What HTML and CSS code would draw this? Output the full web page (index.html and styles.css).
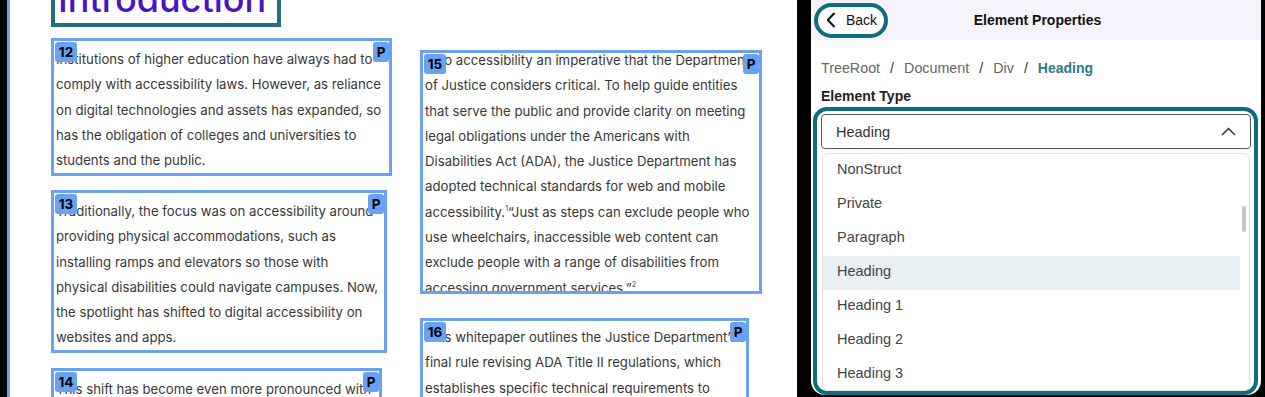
FILE: index.html
```html
<!DOCTYPE html>
<html lang="en">
<head>
    <meta charset="UTF-8">
    <meta name="viewport" content="width=device-width, initial-scale=1.0">
    <title>Element Properties</title>
    <link rel="stylesheet" href="styles.css">
</head>
<body>
    <div class="doc">
        <div class="page">
            <div class="col col-left">
                <div class="heading-box">Introduction</div>

                <div class="block b12">
                    <span class="tag num">12</span><span class="tag type">P</span>
                    <div class="line">Institutions of higher education have always had to</div>
                    <div class="line">comply with accessibility laws. However, as reliance</div>
                    <div class="line">on digital technologies and assets has expanded, so</div>
                    <div class="line">has the obligation of colleges and universities to</div>
                    <div class="line">students and the public.</div>
                </div>

                <div class="block b13">
                    <span class="tag num">13</span><span class="tag type">P</span>
                    <div class="line">Traditionally, the focus was on accessibility around</div>
                    <div class="line">providing physical accommodations, such as</div>
                    <div class="line">installing ramps and elevators so those with</div>
                    <div class="line">physical disabilities could navigate campuses. Now,</div>
                    <div class="line">the spotlight has shifted to digital accessibility on</div>
                    <div class="line">websites and apps.</div>
                </div>

                <div class="block b14">
                    <span class="tag num">14</span><span class="tag type">P</span>
                    <div class="line">This shift has become even more pronounced with</div>
                    <div class="line">the rapid growth of online learning platforms.</div>
                </div>
            </div>

            <div class="col col-right">
                <div class="block b15">
                    <span class="tag num">15</span><span class="tag type">P</span>
                    <div class="lines">
                        <div class="line">Also accessibility an imperative that the Department</div>
                        <div class="line">of Justice considers critical. To help guide entities</div>
                        <div class="line">that serve the public and provide clarity on meeting</div>
                        <div class="line">legal obligations under the Americans with</div>
                        <div class="line">Disabilities Act (ADA), the Justice Department has</div>
                        <div class="line">adopted technical standards for web and mobile</div>
                        <div class="line">accessibility.<sup>1</sup>“Just as steps can exclude people who</div>
                        <div class="line">use wheelchairs, inaccessible web content can</div>
                        <div class="line">exclude people with a range of disabilities from</div>
                        <div class="line">accessing government services.”<sup>2</sup></div>
                    </div>
                </div>

                <div class="block b16">
                    <span class="tag num">16</span><span class="tag type">P</span>
                    <div class="line">This whitepaper outlines the Justice Department’s</div>
                    <div class="line">final rule revising ADA Title II regulations, which</div>
                    <div class="line">establishes specific technical requirements to</div>
                </div>
            </div>
        </div>
    </div>

    <div class="side">
        <div class="panel">
            <div class="panel-head">
                <button class="back-btn" type="button">
                    <svg width="10" height="16" viewBox="0 0 10 16"><polyline points="8,1.5 1.8,8 8,14.5" fill="none" stroke="#111" stroke-width="2" stroke-linecap="round" stroke-linejoin="round"/></svg>
                    <span>Back</span>
                </button>
                <div class="panel-title">Element Properties</div>
                <div></div>
            </div>

            <div class="panel-body">
                <nav class="crumbs">
                    <span>TreeRoot</span><span class="sep">/</span>
                    <span>Document</span><span class="sep">/</span>
                    <span>Div</span><span class="sep">/</span>
                    <span class="current">Heading</span>
                </nav>

                <div class="field-label">Element Type</div>

                <div class="combo">
                    <div class="select">
                        <span>Heading</span>
                        <svg width="15" height="9" viewBox="0 0 15 9"><polyline points="1,8 7.5,1.5 14,8" fill="none" stroke="#333" stroke-width="1.5"/></svg>
                    </div>
                    <div class="listbox">
                        <ul class="options">
                            <li>NonStruct</li>
                            <li>Private</li>
                            <li>Paragraph</li>
                            <li class="active">Heading</li>
                            <li>Heading 1</li>
                            <li>Heading 2</li>
                            <li>Heading 3</li>
                        </ul>
                        <div class="thumb"></div>
                    </div>
                </div>
            </div>
        </div>
    </div>
</body>
</html>
```

FILE: styles.css
```css
body {
    margin: 0;
    height: 397px;
    overflow: hidden;
    background: #000;
    display: flex;
}
.doc {
    margin-left: 7px;
    width: 790px;
    flex: none;
    background: #fff;
    border-left: 3px solid #69a1f5;
    box-sizing: border-box;
    overflow: hidden;
    font-family: Inter, "Liberation Sans", sans-serif;
}
.page {
    display: flex;
    align-items: flex-start;
    gap: 28px;
    margin-top: -25px;
    padding-left: 41px;
}
.col {
    display: flex;
    flex-direction: column;
    align-items: flex-start;
}
.col-right {
    margin-top: 75px;
    gap: 24px;
}
.heading-box {
    border: 4px solid #236e80;
    padding: 0 11px 4px 3px;
    font-size: 36px;
    font-weight: 500;
    line-height: 40px;
    color: #4b13c8;
    margin-bottom: 11px;
}
.block {
    position: relative;
    box-sizing: border-box;
    border: 3px solid #69a1f5;
    padding: 6px 2px 0;
    overflow: hidden;
    font-size: 13.2px;
    line-height: 25.3px;
    color: #383838;
    background: #fff;
}
.line {
    white-space: nowrap;
}
.line sup {
    font-size: 7px;
    line-height: 0;
    vertical-align: 6px;
}
.tag {
    position: absolute;
    top: 1px;
    height: 20px;
    background: #69a1f5;
    border-radius: 3px;
    color: #000;
    font-size: 13.5px;
    font-weight: 700;
    line-height: 21px;
    text-align: center;
}
.num {
    left: 1px;
    width: 22px;
}
.type {
    right: 0;
    width: 16px;
}
.b12 { width: 341px; height: 138px; margin-bottom: 14px; }
.b13 { width: 336px; height: 163px; margin-bottom: 15px; }
.b14 { width: 331px; height: 80px; }
.b15 { width: 342px; height: 244px; padding-top: 0; }
.b15 .lines { margin-top: -5px; }
.b16 { width: 329px; height: 100px; padding-top: 4px; }

.side {
    flex: none;
    width: 468px;
    box-sizing: border-box;
    padding: 0 4px 0 14px;
}
.panel {
    height: 395px;
    background: #fff;
    border-radius: 0 0 14px 14px;
    font-family: "Liberation Sans", Arial, sans-serif;
    color: #111;
}
.panel-head {
    height: 40px;
    background: #f6f3fc;
    display: grid;
    grid-template-columns: 1fr auto 1fr;
    align-items: center;
    padding-left: 3px;
}
.back-btn {
    justify-self: start;
    display: flex;
    align-items: center;
    gap: 10px;
    height: 35px;
    width: 74px;
    box-sizing: border-box;
    padding: 0 0 0 8px;
    border: 4px solid #0e6c7e;
    border-radius: 18px;
    background: #fff;
    font-family: "Liberation Sans", Arial, sans-serif;
    font-size: 14px;
    color: #111;
}
.panel-title {
    font-size: 14px;
    font-weight: 700;
}
.panel-body {
    padding: 0 10px;
}
.crumbs {
    margin-top: 18px;
    display: flex;
    gap: 10px;
    font-size: 14.3px;
    line-height: 20px;
    color: #666;
}
.crumbs .sep {
    color: #333;
}
.crumbs .current {
    color: #2b7a8c;
    font-weight: 700;
    font-size: 14px;
}
.field-label {
    margin-top: 8px;
    font-size: 14px;
    font-weight: 700;
    line-height: 20px;
    color: #222;
}
.combo {
    margin: 1px -7px 0 -8px;
    border: 4px solid #0e6c7e;
    border-radius: 14px;
    padding: 3px 3px 0 4px;
}
.select {
    height: 35px;
    box-sizing: border-box;
    border: 1px solid #555;
    border-radius: 4px;
    display: flex;
    align-items: center;
    justify-content: space-between;
    padding: 0 14px 0 14px;
    font-size: 14.5px;
    color: #333;
}
.listbox {
    position: relative;
    margin: 4px 1px 0;
    height: 238px;
    box-sizing: border-box;
    border: 1px solid #e2e2e2;
    border-radius: 6px;
    overflow: hidden;
}
.options {
    list-style: none;
    margin: 0;
    padding: 0 9px 0 0;
}
.options li {
    height: 34px;
    line-height: 30px;
    padding-left: 14px;
    font-size: 14.5px;
    color: #444;
}
.options li.active {
    background: #e8f0f3;
}
.thumb {
    position: absolute;
    right: 3px;
    top: 52px;
    width: 4px;
    height: 26px;
    border-radius: 2px;
    background: #c4c4c4;
}
```
